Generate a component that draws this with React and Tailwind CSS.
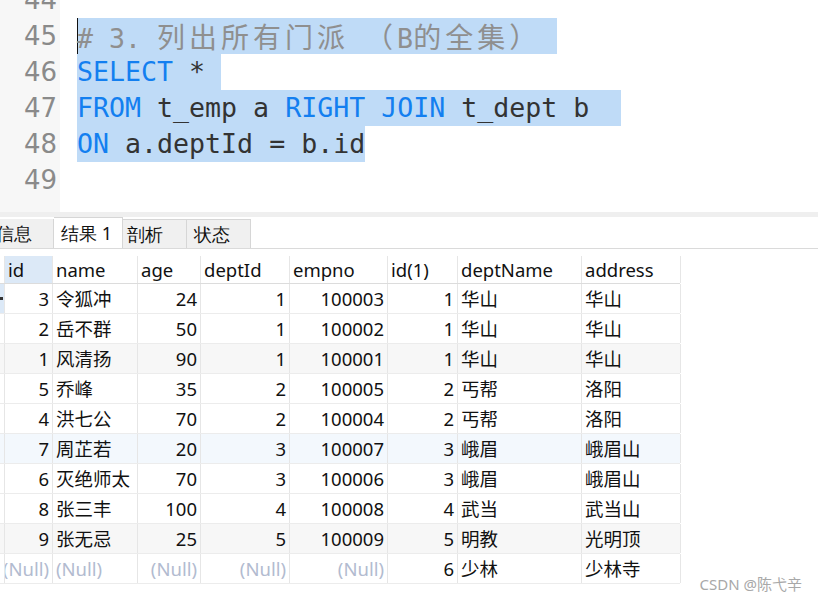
import React from 'react';

const mono = { fontFamily: '"DejaVu Sans Mono", "Liberation Mono", monospace' };

const rows = [
  [3, '令狐冲', 24, 1, 100003, 1, '华山', '华山'],
  [2, '岳不群', 50, 1, 100002, 1, '华山', '华山'],
  [1, '风清扬', 90, 1, 100001, 1, '华山', '华山'],
  [5, '乔峰', 35, 2, 100005, 2, '丐帮', '洛阳'],
  [4, '洪七公', 70, 2, 100004, 2, '丐帮', '洛阳'],
  [7, '周芷若', 20, 3, 100007, 3, '峨眉', '峨眉山'],
  [6, '灭绝师太', 70, 3, 100006, 3, '峨眉', '峨眉山'],
  [8, '张三丰', 100, 4, 100008, 4, '武当', '武当山'],
  [9, '张无忌', 25, 5, 100009, 5, '明教', '光明顶'],
  [null, null, null, null, null, 6, '少林', '少林寺'],
];

const cols = [
  { name: 'id', w: 'w-[48px]', num: true },
  { name: 'name', w: 'w-[85px]' },
  { name: 'age', w: 'w-[63px]', num: true },
  { name: 'deptId', w: 'w-[89px]', num: true },
  { name: 'empno', w: 'w-[98px]', num: true },
  { name: 'id(1)', w: 'w-[70px]', num: true },
  { name: 'deptName', w: 'w-[124px]' },
  { name: 'address', w: 'w-[99px]' },
];

const rowBg = ['bg-white', 'bg-white', 'bg-[#f7f7f7]', 'bg-white', 'bg-white', 'bg-[#f3f8fd]', 'bg-white', 'bg-white', 'bg-[#f7f7f7]', 'bg-white'];

function Kw({ children }) {
  return <span className="text-[#137ff0]">{children}</span>;
}

function Cjk({ children }) {
  return (
    <span className="text-[28px] tracking-[4px]" style={{ fontFamily: '"Noto Sans CJK SC", sans-serif' }}>
      {children}
    </span>
  );
}

function CodeLine({ children, sel, cursor }) {
  return (
    <div className="h-[36px] flex items-start">
      <span
        className={
          'inline-block h-[36px] leading-[36px] whitespace-pre ' +
          (sel ? 'bg-[#bfdbf7] ' : '') +
          (cursor ? 'shadow-[inset_1px_0_0_#111]' : '')
        }
      >
        {children}
      </span>
    </div>
  );
}

function Editor() {
  const nums = [44, 45, 46, 47, 48, 49];
  return (
    <div className="h-[212px] flex overflow-hidden">
      <div className="w-[60px] bg-[#f7f7f7] shrink-0">
        <div className="-mt-[18px] flex flex-col">
          {nums.map((n) => (
            <div
              key={n}
              className="h-[36px] leading-[36px] text-right pr-[3px] text-[26px] text-[#8a8a8a]"
              style={{ fontFamily: '"DejaVu Sans", sans-serif' }}
            >
              {n}
            </div>
          ))}
        </div>
      </div>
      <div className="flex-1 pl-[17px] text-[26.6px] text-[#333333]" style={mono}>
        <div className="-mt-[18px] flex flex-col">
          <CodeLine />
          <CodeLine sel cursor>
            <span className="text-[#8f8f8f]">
              {'# 3. '}
              <Cjk>列出所有门派</Cjk>
              {' '}
              <Cjk>（</Cjk>
              {'B'}
              <Cjk>的全集）</Cjk>
              {' '}
            </span>
          </CodeLine>
          <CodeLine sel>
            <Kw>SELECT</Kw>
            {' * '}
          </CodeLine>
          <CodeLine sel>
            <Kw>FROM</Kw>
            {' t_emp a '}
            <Kw>RIGHT</Kw> <Kw>JOIN</Kw>
            {' t_dept b  '}
          </CodeLine>
          <CodeLine sel>
            <Kw>ON</Kw>
            {' a.deptId = b.id'}
          </CodeLine>
          <CodeLine />
        </div>
      </div>
    </div>
  );
}

function Tabs() {
  return (
    <div className="h-[32px] flex items-end border-b border-[#dadada] text-[18px] text-[#111] whitespace-nowrap">
      <div className="w-[54px] h-[29px] bg-[#f0f0f0] border-r border-[#d6d6d6] flex items-center justify-end pr-[21px] overflow-hidden">
        <span className="shrink-0">信息</span>
      </div>
      <div className="w-[69px] h-[31px] bg-white border-t border-r border-[#d6d6d6] flex items-center pl-[7px]">
        结果 1
      </div>
      <div className="w-[64px] h-[29px] bg-[#f0f0f0] border-t border-r border-[#d6d6d6] flex items-center pl-[4px]">
        剖析
      </div>
      <div className="w-[64px] h-[29px] bg-[#f0f0f0] border-t border-r border-[#d6d6d6] flex items-center pl-[7px]">
        状态
      </div>
    </div>
  );
}

function Cell({ col, value, bg, header }) {
  const isNull = value === null;
  const text = isNull ? '(Null)' : value;
  return (
    <div
      className={
        col.w +
        ' shrink-0 h-full border-r border-[#e6e6e6] flex items-center overflow-hidden whitespace-nowrap ' +
        (header ? 'pl-[3px] justify-start ' : col.num ? 'justify-end pr-[3px] ' : 'pl-[3px] ') +
        (bg || '') +
        (isNull ? ' text-[#b2bbd0]' : '')
      }
    >
      <span className="shrink-0">{text}</span>
    </div>
  );
}

function Grid() {
  return (
    <div className="mt-[7px] w-[680px] text-[18.5px] text-[#111]" style={{ fontFamily: '"Noto Sans", "Noto Sans CJK SC", sans-serif' }}>
      <div className="h-[28px] flex border-b border-[#dcdcdc]">
        <div className="w-[5px] shrink-0 border-r border-[#e6e6e6]" />
        {cols.map((c, i) => (
          <Cell key={c.name} col={c} value={c.name} header bg={i === 0 ? 'bg-[#dce9f7]' : ''} />
        ))}
      </div>
      {rows.map((r, ri) => (
        <div key={ri} className={'h-[30px] flex border-b border-[#ececec] ' + rowBg[ri]}>
          <div
            className={
              'w-[5px] shrink-0 border-r border-[#e6e6e6] flex items-center ' +
              (ri === 0 ? 'bg-[#dce9f7]' : '')
            }
          >
            {ri === 0 && <span className="w-[3px] h-[3px] bg-[#333]" />}
          </div>
          {cols.map((c, ci) => (
            <Cell key={ci} col={c} value={r[ci]} />
          ))}
        </div>
      ))}
    </div>
  );
}

export default function App() {
  return (
    <div className="relative w-[818px] h-[601px] overflow-hidden bg-white">
      <Editor />
      <div className="h-[5px] bg-[#efefef]" />
      <Tabs />
      <Grid />
      <div
        className="absolute right-[16px] bottom-[6px] text-[15px] text-[#a8a8a8]"
        style={{ fontFamily: '"Noto Sans", "Noto Sans CJK SC", sans-serif' }}
      >
        CSDN @陈弋辛
      </div>
    </div>
  );
}
